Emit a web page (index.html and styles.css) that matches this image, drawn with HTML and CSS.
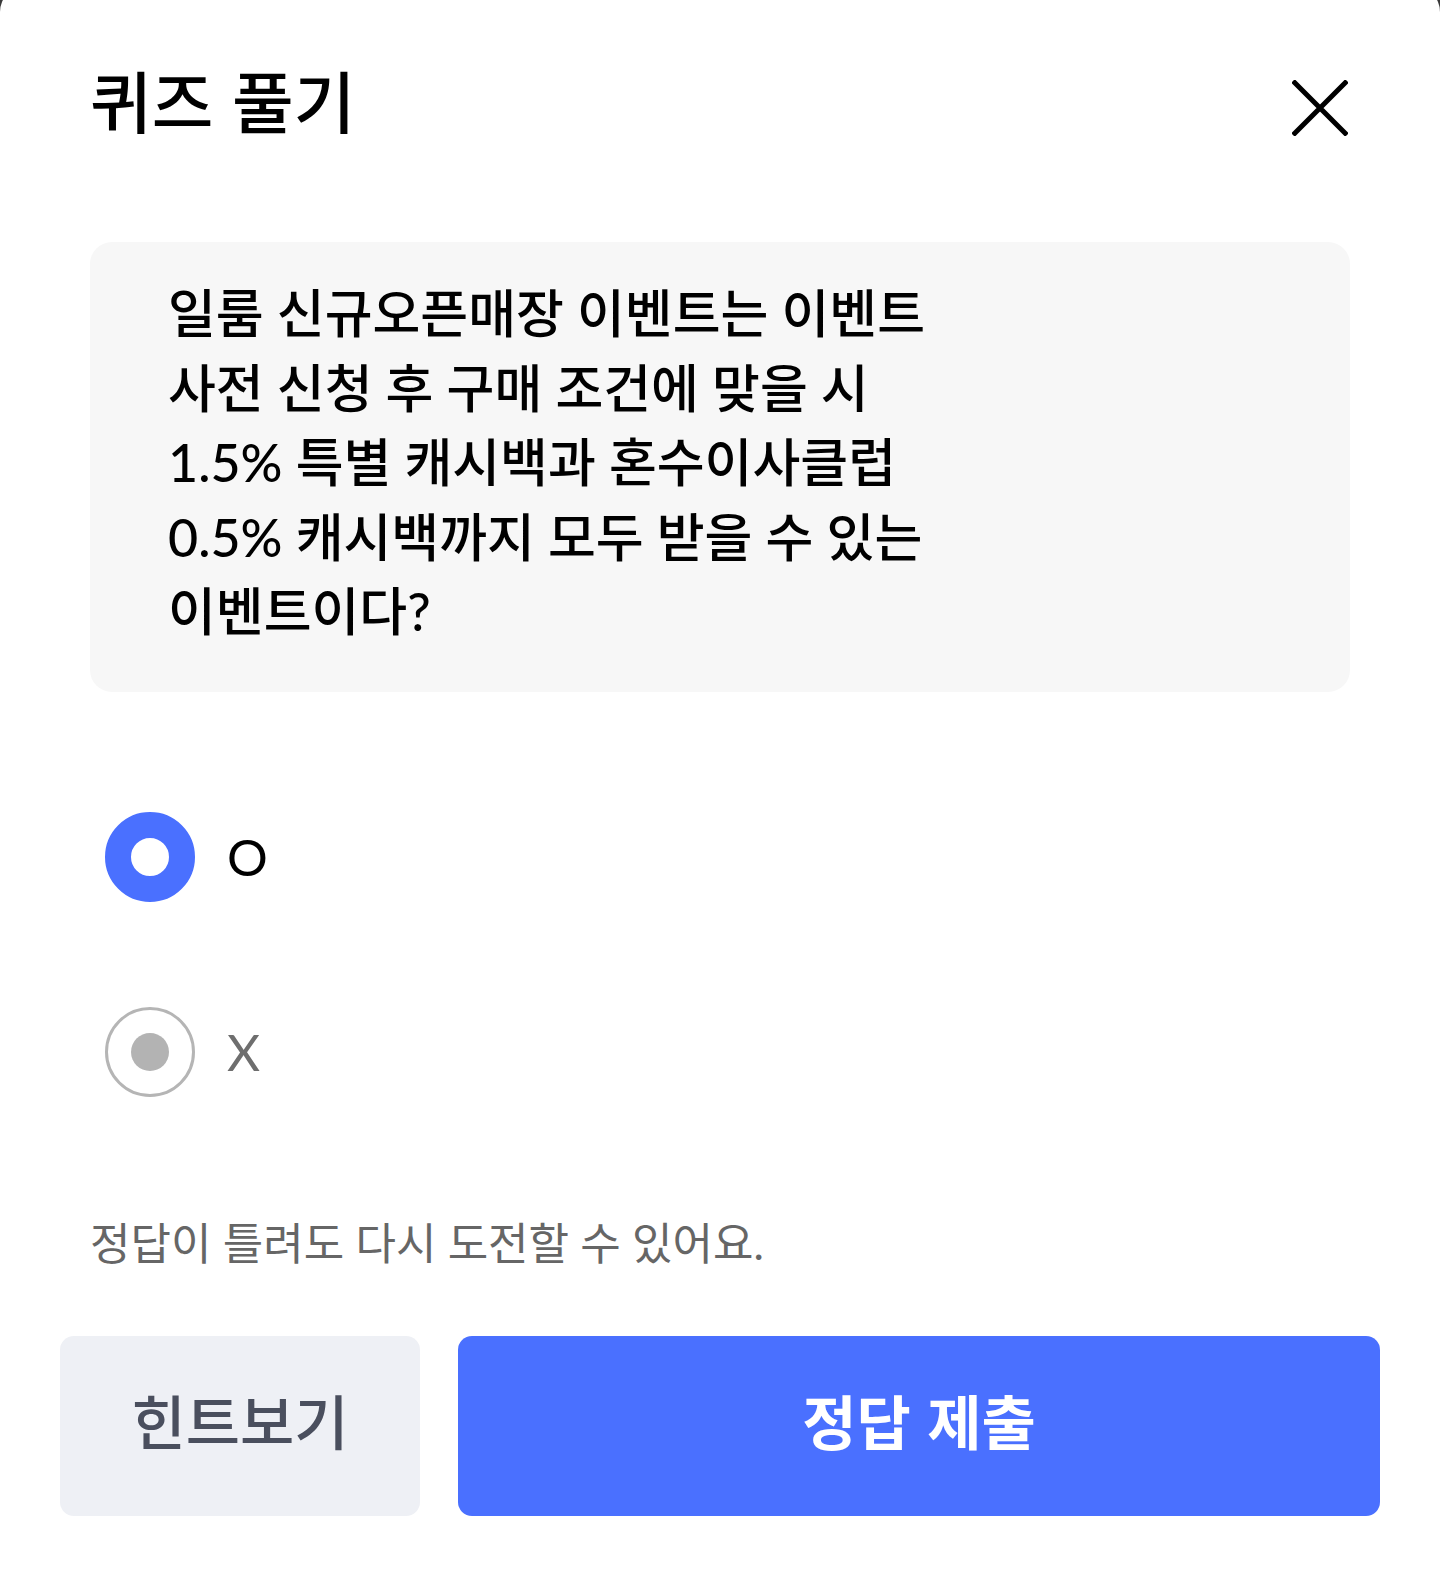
FILE: index.html
```html
<!DOCTYPE html>
<html lang="ko">
<head>
<meta charset="utf-8">
<title>퀴즈 풀기</title>
<link rel="stylesheet" href="styles.css">
</head>
<body>
<div class="sheet">
  <header class="header">
    <h1 class="title">퀴즈 풀기</h1>
    <button class="close" aria-label="닫기">
      <svg width="56" height="56" viewBox="0 0 56 56"><path d="M1 1 L55 55 M55 1 L1 55" stroke="#000" stroke-width="5" fill="none" stroke-linecap="butt"/></svg>
    </button>
  </header>

  <div class="question">
    <p class="question-text">일룸 신규오픈매장 이벤트는 이벤트<br>사전 신청 후 구매 조건에 맞을 시<br>1.5% 특별 캐시백과 혼수이사클럽<br>0.5% 캐시백까지 모두 받을 수 있는<br>이벤트이다?</p>
  </div>

  <div class="options">
    <label class="option">
      <span class="radio radio-on"></span>
      <span class="option-label">O</span>
    </label>
    <label class="option">
      <span class="radio radio-off"><span class="radio-dot"></span></span>
      <span class="option-label option-label-off">X</span>
    </label>
  </div>

  <p class="notice">정답이 틀려도 다시 도전할 수 있어요.</p>

  <div class="actions">
    <button class="btn btn-hint">힌트보기</button>
    <button class="btn btn-submit">정답 제출</button>
  </div>
</div>
</body>
</html>
```

FILE: styles.css
```css
* { box-sizing: border-box; }

html, body {
  margin: 0;
  padding: 0;
}

body {
  background: #3a3a3a;
  font-family: Lato, "Noto Sans CJK KR", sans-serif;
  color: #000;
  overflow: hidden;
}

.sheet {
  margin-top: -14px;
  background: #fff;
  border-radius: 26px 26px 0 0;
  min-height: 1600px;
  padding: 79px 90px 0;
}

.header {
  display: flex;
  justify-content: space-between;
  align-items: flex-start;
}

.title {
  margin: 0;
  font-family: "Noto Sans CJK KR", sans-serif;
  font-size: 67px;
  line-height: 67px;
  font-weight: 500;
  color: #000;
}

.close {
  margin: 15px 2px 0 0;
  padding: 0;
  border: 0;
  background: none;
  width: 56px;
  height: 56px;
  display: block;
}

.close svg { display: block; }

.question {
  margin-top: 106px;
  background: #f7f7f7;
  border-radius: 22px;
  padding: 34px 78px 43px;
}

.question-text {
  margin: 0;
  font-size: 52px;
  line-height: 74.6px;
  font-weight: 500;
  color: #000;
}

.options {
  margin-top: 120px;
  padding-left: 15px;
  display: flex;
  flex-direction: column;
  gap: 105px;
}

.option {
  display: flex;
  align-items: center;
  gap: 32px;
  height: 90px;
}

.radio {
  width: 90px;
  height: 90px;
  border-radius: 50%;
  flex: none;
  display: flex;
  align-items: center;
  justify-content: center;
}

.radio-on {
  border: 26px solid #4a70ff;
  background: #fff;
}

.radio-off {
  border: 3px solid #b5b5b5;
  background: #fff;
}

.radio-dot {
  width: 38px;
  height: 38px;
  border-radius: 50%;
  background: #b3b3b3;
}

.option-label {
  font-size: 51px;
  line-height: 1;
  font-weight: 400;
  color: #000;
}

.option-label-off {
  color: #6e6e6e;
}

.notice {
  margin: 117px 0 0;
  font-size: 44px;
  line-height: 59px;
  color: #666;
  font-weight: 400;
}

.actions {
  margin: 63px -30px 0;
  display: flex;
  gap: 38px;
}

.btn {
  height: 180px;
  border: 0;
  border-radius: 14px;
  font-family: "Noto Sans CJK KR", sans-serif;
  font-size: 59px;
  line-height: 1;
  display: flex;
  align-items: center;
  justify-content: center;
  padding: 0 0 13px;
}

.btn-hint {
  width: 360px;
  flex: none;
  background: #eef0f5;
  color: #4a4f5e;
  font-weight: 500;
}

.btn-submit {
  flex: 1;
  background: #4a70ff;
  color: #fff;
  font-weight: 700;
}
```
